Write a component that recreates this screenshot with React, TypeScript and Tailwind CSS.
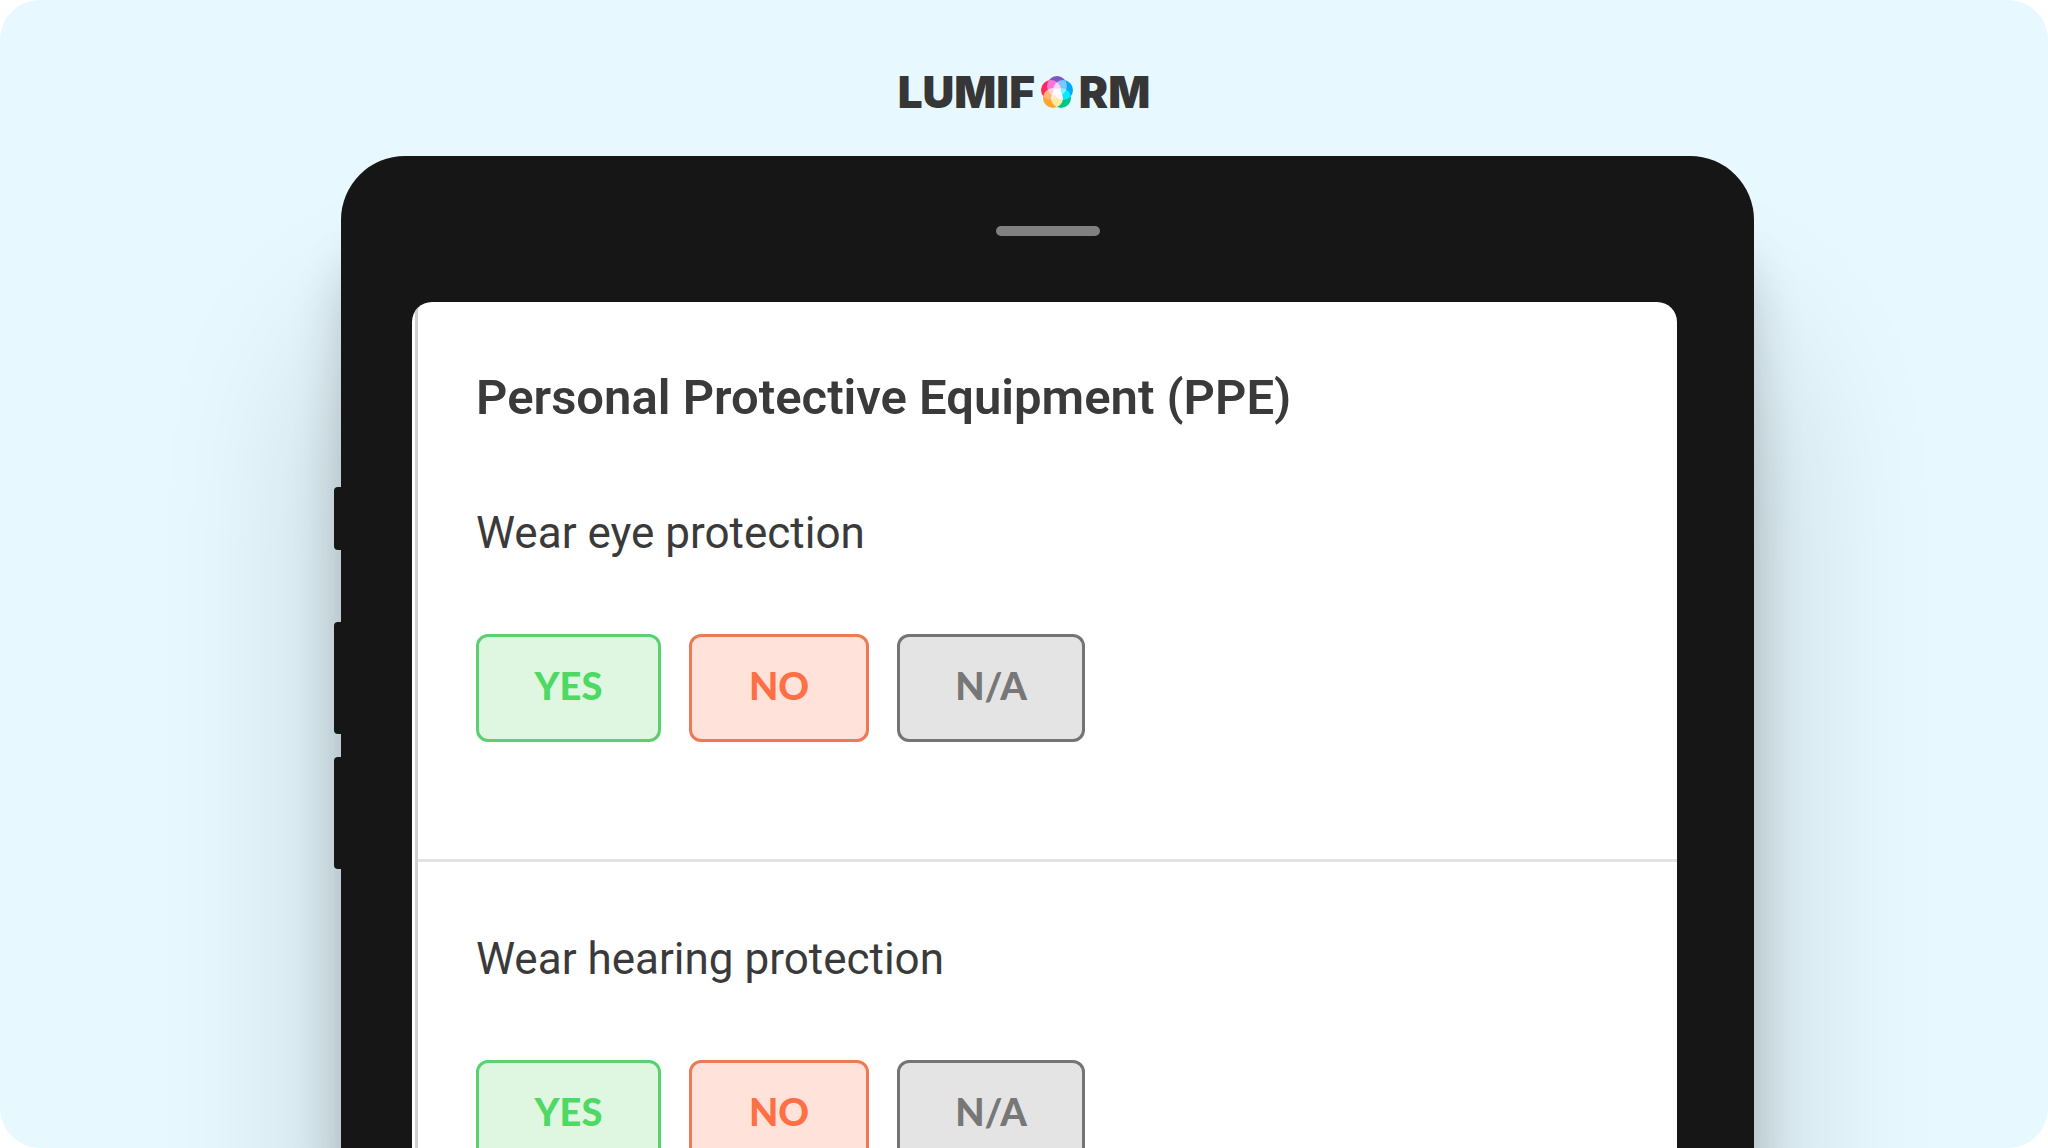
import React, { useState } from 'react';
import clsx from 'clsx';

type Answer = 'yes' | 'no' | 'na';

interface AnswerOption {
  value: Answer;
  label: string;
  className: string;
}

interface Question {
  id: string;
  title: string;
}

const answerOptions: AnswerOption[] = [
  { value: 'yes', label: 'YES', className: 'w-[185px] border-[#5bd071] bg-[#dff7e1] text-[#4dd964]' },
  { value: 'no', label: 'NO', className: 'w-[180px] border-[#ee7955] bg-[#ffe2d9] text-[#fd7046]' },
  { value: 'na', label: 'N/A', className: 'w-[188px] border-[#747474] bg-[#e4e4e4] text-[#777777]' },
];

const questions: Question[] = [
  { id: 'eye', title: 'Wear eye protection' },
  { id: 'hearing', title: 'Wear hearing protection' },
];

const petals = [
  { cx: 16, cy: 10, color: '#7e57c2' },
  { cx: 22, cy: 14, color: '#00a8ff' },
  { cx: 20, cy: 22, color: '#00c48c' },
  { cx: 12, cy: 22, color: '#ffa630' },
  { cx: 10, cy: 14, color: '#fb2c5d' },
];

function Logo() {
  return (
    <div className="flex items-center justify-center gap-1.5 font-['Inter',sans-serif] text-[44px] leading-[52px] font-black text-[#363636]">
      <span>LUMIF</span>
      <svg className="isolate size-8" viewBox="0 0 32 32" aria-hidden="true">
        {petals.map((petal) => (
          <circle
            key={petal.color}
            className="mix-blend-screen"
            cx={petal.cx}
            cy={petal.cy}
            r="10"
            fill={petal.color}
          />
        ))}
      </svg>
      <span>RM</span>
    </div>
  );
}

function QuestionBlock({ question }: { question: Question }) {
  const [answer, setAnswer] = useState<Answer | null>(null);

  return (
    <div role="group" aria-labelledby={question.id}>
      <p id={question.id} className="text-[44px] leading-14">
        {question.title}
      </p>
      <div className="mt-[73px] flex gap-7">
        {answerOptions.map((option) => (
          <button
            key={option.value}
            type="button"
            aria-pressed={answer === option.value}
            onClick={() => setAnswer(option.value)}
            className={clsx(
              "h-27 rounded-xl border-3 pb-1.5 font-['Lato',sans-serif] text-[38px] leading-12 font-black",
              option.className
            )}
          >
            {option.label}
          </button>
        ))}
      </div>
    </div>
  );
}

export default function App() {
  return (
    <div className="h-screen overflow-hidden bg-white">
      <main className="flex h-full flex-col overflow-hidden rounded-[40px] bg-[#e7f9ff] pt-[66px]">
        <Logo />

        {/* Tablet */}
        <div className="relative mt-[38px] mr-[294px] ml-[341px] flex min-h-0 flex-1 flex-col rounded-t-[64px] bg-[#161616] shadow-[0_190px_180px_rgba(0,0,0,0.2),0_90px_50px_rgba(0,0,0,0.18)]">
          {/* Side buttons */}
          <div className="absolute top-[331px] right-full h-[63px] w-[7px] rounded-l-sm bg-[#161616]" />
          <div className="absolute top-[466px] right-full h-28 w-[7px] rounded-l-sm bg-[#161616]" />
          <div className="absolute top-[601px] right-full h-28 w-[7px] rounded-l-sm bg-[#161616]" />

          <div className="flex h-[146px] shrink-0 justify-center pt-[70px]">
            <div className="h-[10px] w-[104px] rounded-full bg-[#808080]" />
          </div>

          {/* Screen */}
          <div className="mr-[77px] ml-[71px] min-h-0 flex-1 overflow-hidden rounded-t-[20px] bg-white pl-[3px]">
            <div className="h-full border-l-3 border-[#cfcfcf] font-['Roboto',sans-serif] text-[#3a3a3a]">
              <section className="border-b-3 border-[#e2e2e2] px-[58px] pt-[66px] pb-[117px]">
                <h1 className="mb-[77px] text-[49px] leading-15 font-semibold">
                  Personal Protective Equipment (PPE)
                </h1>
                <QuestionBlock question={questions[0]} />
              </section>
              <section className="px-[58px] pt-[69px]">
                <QuestionBlock question={questions[1]} />
              </section>
            </div>
          </div>
        </div>
      </main>
    </div>
  );
}
